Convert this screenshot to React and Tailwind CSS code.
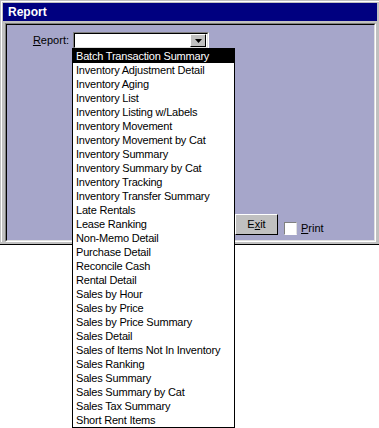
import React from 'react';

const reports = [
  'Batch Transaction Summary',
  'Inventory Adjustment Detail',
  'Inventory Aging',
  'Inventory List',
  'Inventory Listing w/Labels',
  'Inventory Movement',
  'Inventory Movement by Cat',
  'Inventory Summary',
  'Inventory Summary by Cat',
  'Inventory Tracking',
  'Inventory Transfer Summary',
  'Late Rentals',
  'Lease Ranking',
  'Non-Memo Detail',
  'Purchase Detail',
  'Reconcile Cash',
  'Rental Detail',
  'Sales by Hour',
  'Sales by Price',
  'Sales by Price Summary',
  'Sales Detail',
  'Sales of Items Not In Inventory',
  'Sales Ranking',
  'Sales Summary',
  'Sales Summary by Cat',
  'Sales Tax Summary',
  'Short Rent Items',
];

const font = { fontFamily: '"Liberation Sans", Arial, sans-serif' };

const App = () => {
  return (
    <div className="relative w-[379px] h-[428px] bg-white overflow-hidden text-black" style={font}>
      {/* window frame */}
      <div className="w-[379px] h-[245px] bg-[#c0c0c0] border-b border-black pt-px pl-px">
        <div className="border-t border-l border-white pt-px pl-px flex flex-col">
          <div className="w-[374px] h-[18px] bg-[#000080] text-white font-bold text-[12px] pl-[5px] flex items-center">
            Report
          </div>
          <div className="h-[2px]" />
          {/* sunken client area */}
          <div className="ml-[2px] w-[371px] h-[219px] border-t border-l border-[#808080] border-b border-r border-b-white border-r-white">
            <div className="h-full border-t border-l border-black border-b border-r border-b-[#dfdfdf] border-r-[#dfdfdf] bg-[#a6a6ca] flex flex-col text-[11px]">
              <div className="flex items-center mt-[7px]">
                <div className="w-[66px] text-right pr-[4px]">
                  <span className="underline">R</span>eport:
                </div>
                <div className="w-[136px] h-[17px] border-t border-l border-[#808080] border-b border-r border-b-white border-r-white">
                  <div className="h-full bg-white border-t border-l border-black border-b border-r border-b-[#dfdfdf] border-r-[#dfdfdf] flex justify-end pr-px">
                    <div className="w-[16px] h-full bg-[#c0c0c0] border-t border-l border-white border-b border-r border-b-black border-r-black flex items-center justify-center">
                      <svg width="7" height="4" viewBox="0 0 7 4">
                        <path d="M0 0h7L3.5 4z" fill="#000" />
                      </svg>
                    </div>
                  </div>
                </div>
              </div>
              <div className="mt-auto mb-[5px] pl-[228px] flex items-end">
                <div className="w-[43px] h-[21px] bg-[#c0c0c0] border-t border-l border-white border-b border-r border-b-black border-r-black flex items-center justify-center">
                  E<span className="underline">x</span>it
                </div>
                <div className="ml-[6px] w-[13px] h-[13px] bg-white border-t border-l border-[#808080] border-b border-r border-b-white border-r-[#dfdfdf]" />
                <div className="ml-[4px] leading-[13px]">
                  <span className="underline">P</span>rint
                </div>
              </div>
            </div>
          </div>
        </div>
      </div>

      {/* open dropdown list */}
      <div className="absolute left-[72px] top-[48px] w-[163px] bg-white border border-black text-[11px] tracking-[-0.2px]">
        {reports.map((r, i) => (
          <div
            key={r}
            className={
              'h-[14px] leading-[14px] pl-[3px] whitespace-nowrap ' +
              (i === 0 ? 'bg-black text-white' : '')
            }
          >
            {r}
          </div>
        ))}
      </div>
    </div>
  );
};

export default App;
